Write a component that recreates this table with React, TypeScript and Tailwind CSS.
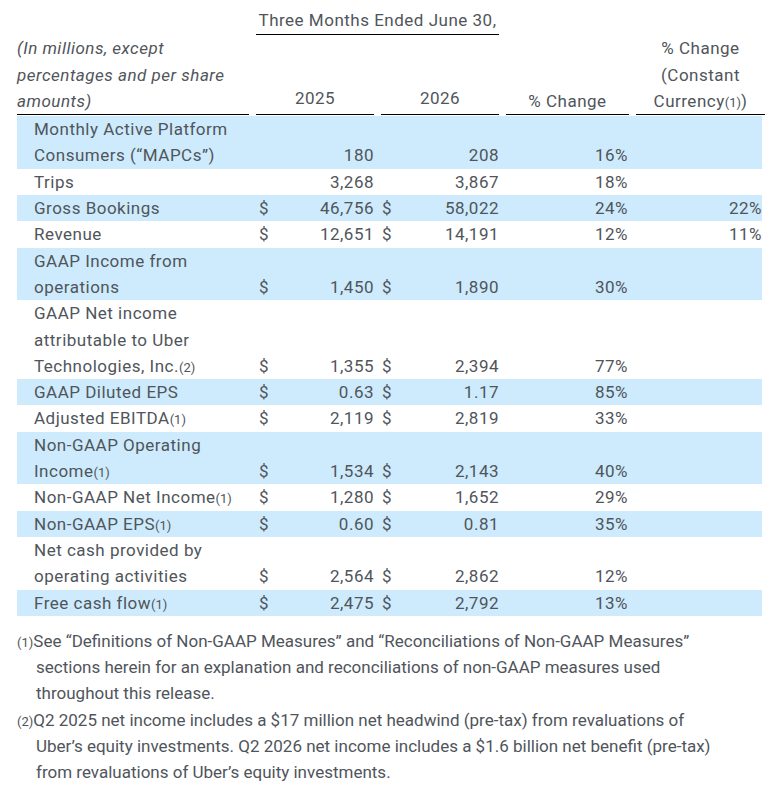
const rows: {
  label: string[];
  sup?: string;
  dollar?: boolean;
  a: string;
  b: string;
  pct: string;
  cc?: string;
  shade: boolean;
}[] = [
  { label: ["Monthly Active Platform", "Consumers (“MAPCs”)"], a: "180", b: "208", pct: "16%", shade: true },
  { label: ["Trips"], a: "3,268", b: "3,867", pct: "18%", shade: false },
  { label: ["Gross Bookings"], dollar: true, a: "46,756", b: "58,022", pct: "24%", cc: "22%", shade: true },
  { label: ["Revenue"], dollar: true, a: "12,651", b: "14,191", pct: "12%", cc: "11%", shade: false },
  { label: ["GAAP Income from", "operations"], dollar: true, a: "1,450", b: "1,890", pct: "30%", shade: true },
  {
    label: ["GAAP Net income", "attributable to Uber", "Technologies, Inc."],
    sup: "(2)",
    dollar: true,
    a: "1,355",
    b: "2,394",
    pct: "77%",
    shade: false,
  },
  { label: ["GAAP Diluted EPS"], dollar: true, a: "0.63", b: "1.17", pct: "85%", shade: true },
  { label: ["Adjusted EBITDA"], sup: "(1)", dollar: true, a: "2,119", b: "2,819", pct: "33%", shade: false },
  { label: ["Non-GAAP Operating", "Income"], sup: "(1)", dollar: true, a: "1,534", b: "2,143", pct: "40%", shade: true },
  { label: ["Non-GAAP Net Income"], sup: "(1)", dollar: true, a: "1,280", b: "1,652", pct: "29%", shade: false },
  { label: ["Non-GAAP EPS"], sup: "(1)", dollar: true, a: "0.60", b: "0.81", pct: "35%", shade: true },
  { label: ["Net cash provided by", "operating activities"], dollar: true, a: "2,564", b: "2,862", pct: "12%", shade: false },
  { label: ["Free cash flow"], sup: "(1)", dollar: true, a: "2,475", b: "2,792", pct: "13%", shade: true },
];

const cols = "grid grid-cols-[232px_118px_118px_123px_129px] gap-x-[7px]";

// small "(1)" note markers, kept out of the line box height
function Sup({ children }: { children: string }) {
  return <span className="text-[13px] leading-[0] tracking-normal">{children}</span>;
}

export default function App() {
  return (
    <div
      className="min-h-[791px] w-[779px] bg-white px-[17px] text-[17px] leading-[26.3px] text-[#50555b]"
      style={{ fontFamily: "Roboto, 'Liberation Sans', sans-serif" }}
    >
      <div className="tracking-[0.5px]">
        {/* Header row 1 */}
        <div className={`${cols} pt-[7px]`}>
          <div />
          <div className="col-span-2 border-b-[1.5px] border-black pb-px text-center">Three Months Ended June 30,</div>
        </div>

        {/* Header row 2 */}
        <div className={cols}>
          <div className="border-b-[1.5px] border-black italic">
            (In millions, except
            <br />
            percentages and per share
            <br />
            amounts)
          </div>
          <div className="flex items-end justify-center border-b-[1.5px] border-black pb-[3px]">2025</div>
          <div className="flex items-end justify-center border-b-[1.5px] border-black pb-[3px]">2026</div>
          <div className="flex items-end justify-center border-b-[1.5px] border-black">% Change</div>
          <div className="flex items-end justify-center border-b-[1.5px] border-black text-center">
            <div>
              % Change
              <br />
              (Constant
              <br />
              Currency<Sup>(1)</Sup>)
            </div>
          </div>
        </div>

        {/* Body */}
        <div className="mt-px">
          {rows.map((r, i) => (
            <div key={i} className={`${cols} ${r.shade ? "bg-[#cdebfc]" : "bg-white"}`}>
              <div className="pl-[17px]">
                {r.label.map((l, j) => (
                  <div key={j}>
                    {l}
                    {j === r.label.length - 1 && r.sup ? <Sup>{r.sup}</Sup> : null}
                  </div>
                ))}
              </div>
              <div className="flex items-end justify-between">
                <span className="pl-[3px]">{r.dollar ? "$" : ""}</span>
                <span>{r.a}</span>
              </div>
              <div className="flex items-end justify-between">
                <span className="pl-px">{r.dollar ? "$" : ""}</span>
                <span>{r.b}</span>
              </div>
              <div className="flex items-end justify-end pr-px">{r.pct}</div>
              <div className="flex items-end justify-end pr-[3px]">{r.cc ?? ""}</div>
            </div>
          ))}
        </div>
      </div>

      {/* Footnotes */}
      <div className="mt-[12px] pl-[19px]">
        <p className="-indent-[19px]">
          <Sup>(1)</Sup>See “Definitions of Non-GAAP Measures” and “Reconciliations of Non-GAAP Measures”
          <br />
          sections herein for an explanation and reconciliations of non-GAAP measures used
          <br />
          throughout this release.
        </p>
        <p className="-indent-[19px]">
          <Sup>(2)</Sup>Q2 2025 net income includes a $17 million net headwind (pre-tax) from revaluations of
          <br />
          Uber’s equity investments. Q2 2026 net income includes a $1.6 billion net benefit (pre-tax)
          <br />
          from revaluations of Uber’s equity investments.
        </p>
      </div>
    </div>
  );
}
